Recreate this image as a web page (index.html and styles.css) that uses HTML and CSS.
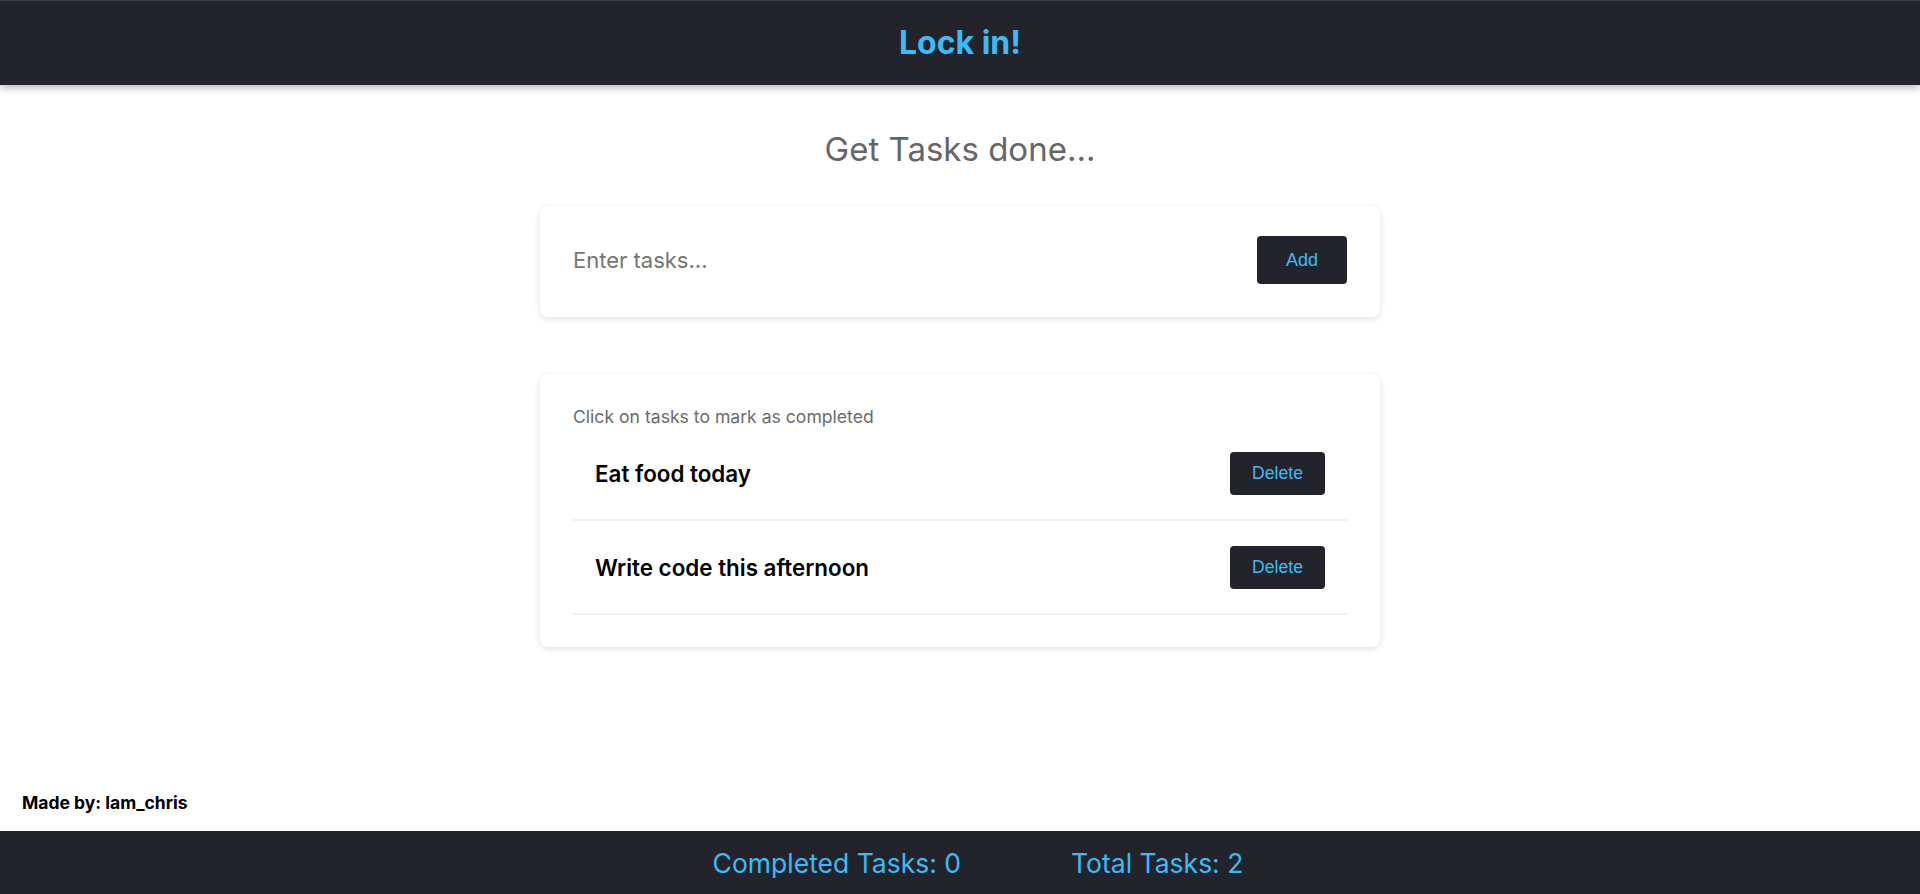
FILE: index.html
```html
<!DOCTYPE html>
<html lang="en">
<head>
<meta charset="utf-8">
<title>Lock in!</title>
<link rel="stylesheet" href="styles.css">
</head>
<body>
<header class="topbar">
  <h1 class="brand">Lock in!</h1>
</header>
<main class="main">
  <h2 class="subtitle">Get Tasks done...</h2>
  <section class="card add-card">
    <input class="task-input" type="text" placeholder="Enter tasks...">
    <button class="btn btn-add">Add</button>
  </section>
  <section class="card list-card">
    <p class="hint">Click on tasks to mark as completed</p>
    <ul class="task-list">
      <li class="task"><span class="task-name">Eat food today</span><button class="btn btn-delete">Delete</button></li>
      <li class="task"><span class="task-name">Write code this afternoon</span><button class="btn btn-delete">Delete</button></li>
    </ul>
  </section>
</main>
<p class="credit">Made by: lam_chris</p>
<footer class="stats">
  <span class="stat">Completed Tasks: 0</span>
  <span class="stat">Total Tasks: 2</span>
</footer>
</body>
</html>
```
FILE: styles.css
```css
* { box-sizing: border-box; }
html, body { margin: 0; padding: 0; }
body {
  font-family: Inter, "Noto Sans", sans-serif;
  background: #ffffff;
  min-height: 100vh;
  display: flex;
  flex-direction: column;
  color: #000;
}
.topbar {
  height: 85px;
  background: #22232b;
  border-top: 1px solid #3b3c43;
  box-shadow: 0 3px 8px rgba(0, 0, 0, 0.28);
  display: flex;
  align-items: center;
  justify-content: center;
  position: relative;
  z-index: 1;
}
.brand {
  margin: 0;
  font-size: 32px;
  font-weight: 700;
  line-height: 40px;
  color: #38bdf8;
}
.main {
  flex: 1;
  display: flex;
  flex-direction: column;
  align-items: center;
}
.subtitle {
  margin: 44px 0 37px;
  font-size: 33px;
  line-height: 40px;
  font-weight: 400;
  color: #666666;
}
.card {
  width: 840px;
  background: #fff;
  border-radius: 8px;
  box-shadow: 0 2px 7px rgba(0, 0, 0, 0.12);
}
.add-card {
  display: flex;
  align-items: center;
  padding: 30px 33px 33px;
}
.task-input {
  flex: 1;
  border: none;
  outline: none;
  padding: 0;
  font-family: Inter, "Noto Sans", sans-serif;
  font-size: 22px;
  color: #333;
  background: transparent;
}
.task-input::placeholder { color: #757575; }
.btn {
  background: #22232b;
  color: #38bdf8;
  border: none;
  border-radius: 4px;
  font-family: "Liberation Sans", Arial, sans-serif;
  cursor: pointer;
}
.btn-add {
  width: 90px;
  height: 48px;
  font-size: 18px;
}
.list-card {
  margin-top: 57px;
  padding: 33px 33px 32px;
}
.hint {
  margin: 0;
  font-size: 17.6px;
  line-height: 20px;
  color: #6b6b6b;
}
.task-list {
  list-style: none;
  margin: 0;
  padding: 0;
}
.task {
  height: 94px;
  padding: 0 22px 0 22px;
  border-bottom: 2px solid #f0f0f0;
  display: flex;
  align-items: center;
  justify-content: space-between;
}
.task-name {
  font-size: 22.4px;
  font-weight: 600;
  color: #000;
}
.btn-delete {
  width: 95px;
  height: 43px;
  font-size: 17.6px;
}
.credit {
  margin: 0 0 18px;
  padding-left: 22px;
  font-size: 17.5px;
  line-height: 20px;
  font-weight: 700;
  color: #000;
}
.stats {
  height: 63px;
  background: #22232b;
  display: flex;
  align-items: center;
  justify-content: center;
  gap: 110px;
  padding-left: 36px;
}
.stat {
  font-size: 26.5px;
  color: #38bdf8;
}
```
